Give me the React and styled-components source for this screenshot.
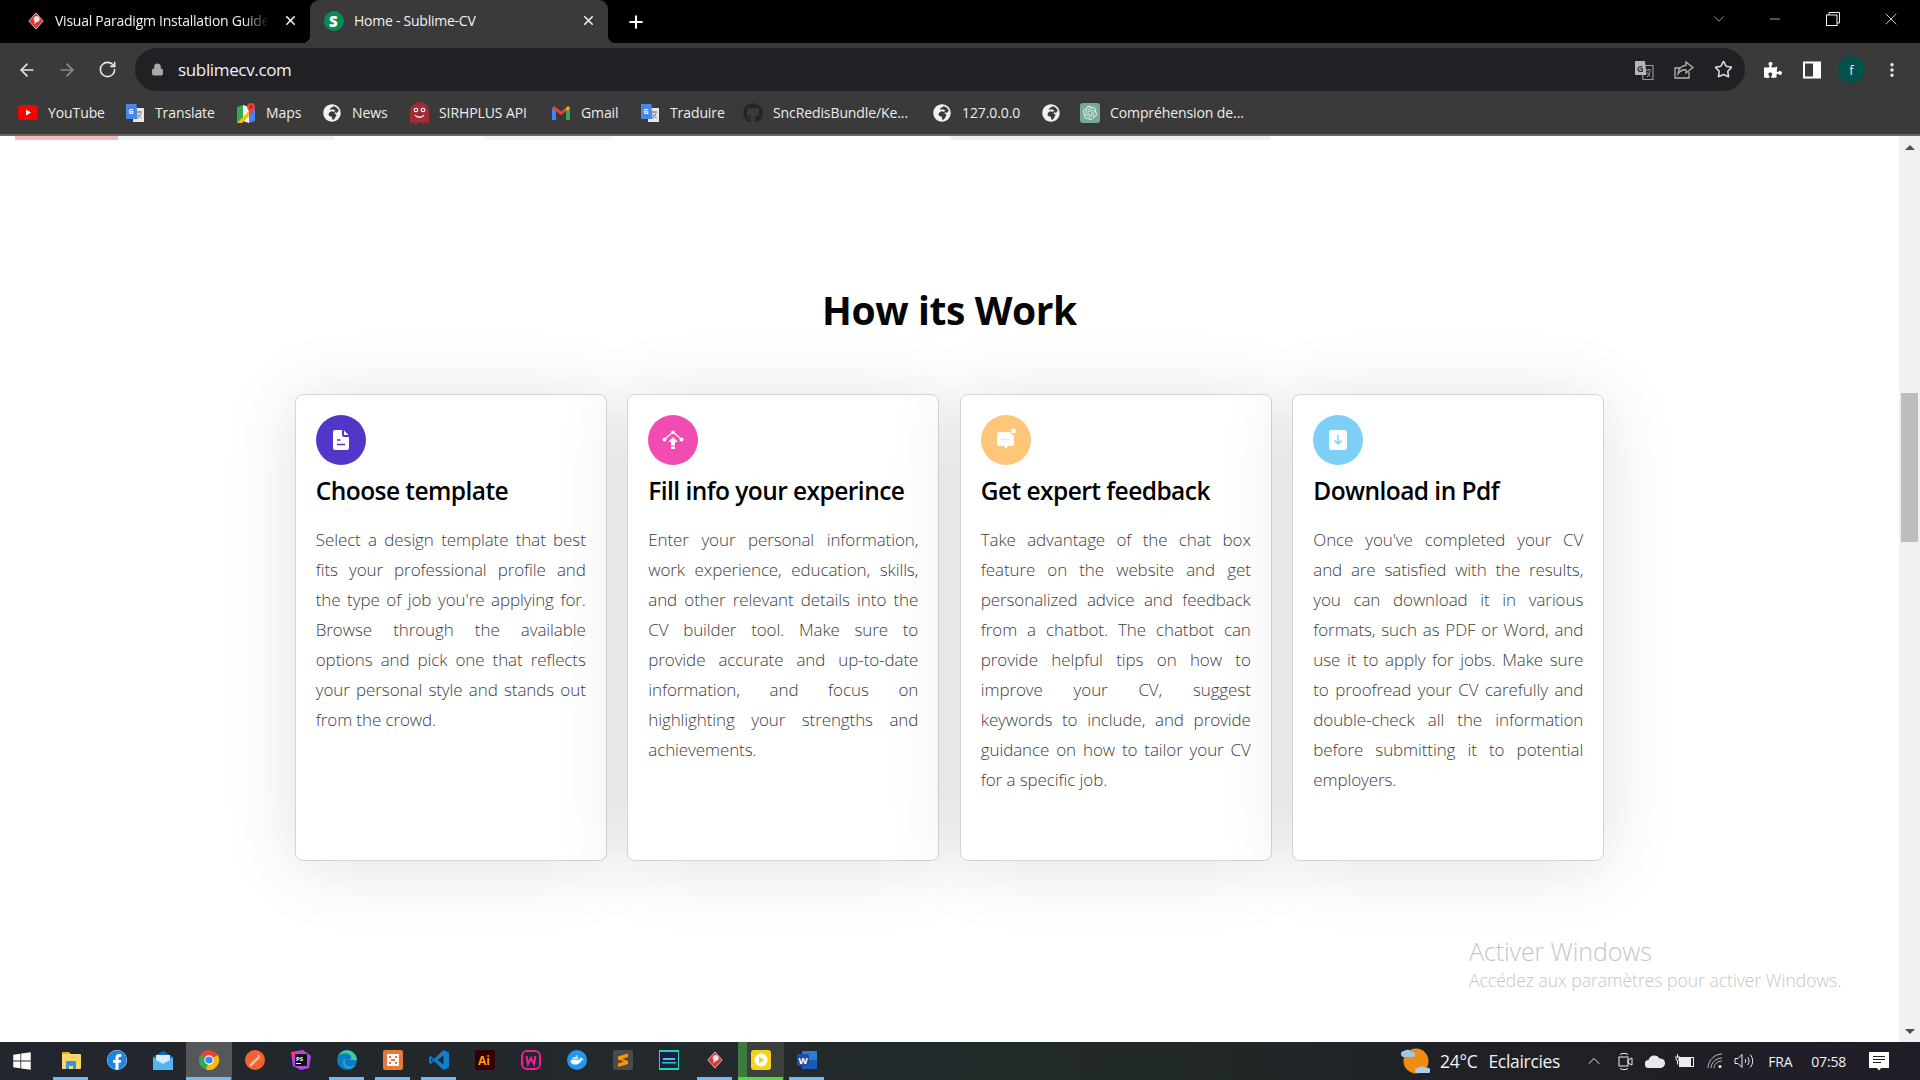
import React from 'react';
import styled, { createGlobalStyle } from 'styled-components';
import { ArrowLeft, ArrowRight, RotateCw, Star, X, Plus, ChevronDown, ChevronUp, Minus, Lock, MoreVertical } from 'lucide-react';
import { FaGithub, FaDocker, FaFacebook, FaPuzzlePiece, FaGlobeAfrica, FaWindows } from 'react-icons/fa';
import { SiOpenai } from 'react-icons/si';

const Global = createGlobalStyle`
	html, body { margin: 0; padding: 0; height: 100%; overflow: hidden; background: #fff; }
	#root { height: 100%; }
	* { box-sizing: border-box; }
`;

const Page = styled.div`
	display: flex;
	flex-direction: column;
	width: 1920px;
	height: 1080px;
	font-family: 'Open Sans', 'Noto Sans', sans-serif;
	position: relative;
	overflow: hidden;
`;

const TabStrip = styled.div`
	display: flex;
	align-items: stretch;
	height: 43px;
	background: #000;
	color: #fff;
	padding-left: 12px;
	flex-shrink: 0;
`;

const Tab = styled.div`
	position: relative;
	display: flex;
	align-items: center;
	width: ${(p) => p.$w}px;
	padding-left: ${(p) => p.$pad}px;
	padding-right: 12px;
	padding-bottom: 2px;
	background: ${(p) => (p.$active ? '#3a3a3a' : 'transparent')};
	border-radius: 9px 9px 0 0;
	${(p) =>
		p.$active &&
		`
		&::before, &::after {
			content: '';
			position: absolute;
			bottom: 0;
			width: 8px;
			height: 8px;
			background: radial-gradient(circle at ${'var(--c)'}, transparent 8px, #3a3a3a 8.5px);
		}
		&::before { left: -8px; --c: 0 0; }
		&::after { right: -8px; --c: 100% 0; }
	`}
`;

const TabIcon = styled.span`
	display: flex;
	width: ${(p) => p.$size}px;
	justify-content: center;
	margin-right: ${(p) => p.$gap}px;
	flex-shrink: 0;
`;

const TabTitle = styled.span`
	flex: 1;
	font-size: 14px;
	letter-spacing: -0.25px;
	white-space: nowrap;
	overflow: hidden;
	color: #f1f1f1;
	${(p) =>
		p.$fade &&
		`mask-image: linear-gradient(to right, #000 88%, transparent 100%);`}
`;

const NewTab = styled.div`
	display: flex;
	align-items: center;
	margin-left: 18px;
`;

const WindowControls = styled.div`
	margin-left: auto;
	display: flex;
	align-items: center;
	height: 100%;
	padding-bottom: 5px;
`;

const WinBtn = styled.div`
	display: flex;
	justify-content: center;
	align-items: center;
	width: ${(p) => p.$w}px;
`;

const Toolbar = styled.div`
	display: flex;
	align-items: flex-end;
	height: 48px;
	background: #3a3a3a;
	flex-shrink: 0;
	padding-left: 17px;
`;

const NavGroup = styled.div`
	display: flex;
	align-items: center;
	height: 43px;
`;

const NavBtn = styled.div`
	display: flex;
	justify-content: center;
	width: 20px;
	margin-right: ${(p) => p.$mr ?? 20}px;
`;

const Omnibox = styled.div`
	display: flex;
	align-items: center;
	width: 1610px;
	height: 43px;
	margin-left: 18px;
	background: #202124;
	border-radius: 22px;
	padding-left: 16px;
	padding-right: 12px;
`;

const Url = styled.span`
	color: #f1f1f1;
	font-size: 17px;
	letter-spacing: -0.35px;
	margin-left: 14px;
`;

const OmniRight = styled.div`
	margin-left: auto;
	display: flex;
	align-items: center;
	gap: 20px;
`;

const ToolRight = styled.div`
	display: flex;
	align-items: center;
	height: 43px;
	margin-left: 19px;
`;

const Avatar = styled.div`
	width: 27px;
	height: 27px;
	border-radius: 50%;
	background: #00524a;
	color: #e8f0ee;
	font-size: 13px;
	display: flex;
	align-items: center;
	justify-content: center;
	margin: 0 18px 0 17px;
`;

const Bookmarks = styled.div`
	display: flex;
	align-items: center;
	height: 45px;
	background: #3a3a3a;
	border-bottom: 2px solid #666;
	padding-left: 18px;
	flex-shrink: 0;
`;

const Bookmark = styled.div`
	display: flex;
	align-items: center;
	width: ${(p) => p.$w}px;
	flex-shrink: 0;
`;

const BmIcon = styled.span`
	display: flex;
	justify-content: center;
	width: 20px;
	margin-right: ${(p) => (p.$label ? 10 : 0)}px;
`;

const BmLabel = styled.span`
	color: #ededed;
	font-size: 14px;
	letter-spacing: -0.1px;
	white-space: nowrap;
`;

const Viewport = styled.div`
	flex: 1;
	display: flex;
	min-height: 0;
	background: #fff;
`;

const Content = styled.main`
	flex: 1;
	min-width: 0;
	display: flex;
	flex-direction: column;
	align-items: center;
	position: relative;
`;

const CutOffRow = styled.div`
	align-self: stretch;
	display: flex;
	height: 4px;
	padding-left: 15px;
`;

const CutOff = styled.div`
	width: ${(p) => p.$w}px;
	margin-right: ${(p) => p.$mr || 0}px;
	background: ${(p) => p.$c};
`;

const Heading = styled.h2`
	margin: 145px 0 0;
	height: 50px;
	line-height: 50px;
	font-size: 39px;
	font-weight: 700;
	letter-spacing: -0.4px;
	color: #050505;
`;

const Cards = styled.div`
	display: grid;
	grid-template-columns: repeat(4, 312px);
	gap: 20.5px;
	margin-top: 59px;
`;

const Card = styled.article`
	height: 467px;
	background: #fff;
	border: 1px solid #d4d4d4;
	border-radius: 8px;
	padding: 20px 20px 0;
	box-shadow: 0 5px 75px rgba(0, 0, 0, 0.12);
`;

const Badge = styled.div`
	width: 50px;
	height: 50px;
	border-radius: 50%;
	background: ${(p) => p.$bg};
	display: flex;
	align-items: center;
	justify-content: center;
`;

const CardTitle = styled.h3`
	margin: 9px 0 0;
	height: 34px;
	line-height: 34px;
	font-size: 24.5px;
	font-weight: 600;
	letter-spacing: -0.55px;
	color: #000;
	white-space: nowrap;
`;

const Body = styled.p`
	margin: 17px 0 0;
	font-size: 17px;
	font-weight: 300;
	line-height: 30px;
	letter-spacing: -0.1px;
	color: #404040;
`;

const Line = styled.span`
	display: block;
	text-align: justify;
	text-align-last: ${(p) => (p.$last ? 'left' : 'justify')};
`;

const Watermark = styled.div`
	position: absolute;
	left: 1469px;
	top: 799px;
	color: #c6c6c6;
	font-weight: 300;
	white-space: nowrap;
`;

const WmTitle = styled.div`
	font-size: 25px;
	line-height: 32px;
	letter-spacing: -0.1px;
`;

const WmSub = styled.div`
	font-size: 17.5px;
	line-height: 26px;
	letter-spacing: 0;
`;

const Scrollbar = styled.div`
	width: 21px;
	background: #f1f1f1;
	display: flex;
	flex-direction: column;
	align-items: center;
	padding-top: 9px;
	padding-bottom: 8px;
`;

const Thumb = styled.div`
	width: 17px;
	height: 149px;
	background: #bdbdbd;
	margin-top: 243px;
	margin-bottom: auto;
`;

const Arrow = styled.div`
	width: 0;
	height: 0;
	border-left: 5px solid transparent;
	border-right: 5px solid transparent;
	${(p) => (p.$down ? 'border-top: 5px solid #505050;' : 'border-bottom: 5px solid #505050;')}
`;

const Taskbar = styled.div`
	display: flex;
	align-items: stretch;
	height: 38px;
	background: linear-gradient(to right, #22262d 0%, #23292c 40%, #222a28 60%, #1f2126 75%, #211d26 100%);
	flex-shrink: 0;
`;

const StartBtn = styled.div`
	width: 48px;
	display: flex;
	align-items: center;
	justify-content: center;
	padding-right: 4px;
`;

const Cell = styled.div`
	position: relative;
	width: 46px;
	display: flex;
	align-items: center;
	justify-content: center;
	padding-bottom: 2px;
	background: ${(p) =>
		p.$state === 'focus'
			? '#55575b'
			: p.$state === 'flash'
			? 'linear-gradient(to right, #3d7a3d 0 9px, #3b403c 9px)'
			: 'transparent'};
	${(p) =>
		p.$state &&
		`&::after {
			content: '';
			position: absolute;
			bottom: 0;
			left: ${p.$state === 'open' ? 5 : 0}px;
			right: ${p.$state === 'open' ? 6 : 1}px;
			height: 3px;
			background: ${p.$state === 'flash' ? '#4fdd3c' : '#76b9ed'};
		}`}
`;

const Tray = styled.div`
	margin-left: auto;
	display: flex;
	align-items: center;
	color: #f2f2f2;
	padding-right: 31px;
`;

const WeatherText = styled.span`
	font-size: 17.5px;
	letter-spacing: -0.3px;
	margin-left: ${(p) => p.$ml}px;
	white-space: nowrap;
`;

const TrayItem = styled.span`
	display: flex;
	align-items: center;
	justify-content: center;
	margin-left: ${(p) => p.$ml}px;
`;

const TrayText = styled.span`
	font-size: 14px;
	letter-spacing: -0.2px;
	margin-left: ${(p) => p.$ml}px;
`;

const VpLogo = ({ size = 18 }) => (
	<svg width={size} height={size} viewBox="0 0 20 20">
		<path d="M10 1l8 9-8 9-8-9z" fill="#d43b3b" stroke="#e9b9b9" strokeWidth="1" />
		<path d="M9 5a3.4 3.4 0 1 1 1.5 6.3L8 14l.6-3.6A3.4 3.4 0 0 1 9 5z" fill="#fff" opacity=".85" />
	</svg>
);

const GTranslate = () => (
	<svg width="20" height="20" viewBox="0 0 20 20">
		<path d="M8 5h11v14H8z" fill="#e5e7ea" />
		<path d="M1 1h10.5l1 15H1z" fill="#4a86e8" />
		<text x="3.5" y="11" fontSize="7" fontWeight="700" fill="#fff" fontFamily="Open Sans">G</text>
		<path d="M11 9h6M14 8v2M12.5 15c2-1 3-3 3.5-5M13 11c.5 2 2 3.5 3.5 4" stroke="#777" strokeWidth="1" fill="none" />
	</svg>
);

const MapsIcon = () => (
	<svg width="18" height="20" viewBox="0 0 18 20">
		<path d="M0 4l6-2v16l-6 2z" fill="#34a853" />
		<path d="M6 2l6 2v16l-6-2z" fill="#f4f4f4" />
		<path d="M12 8l6-2v12l-6 2z" fill="#4285f4" />
		<path d="M0 20l12-12v5l-7 7z" fill="#fbbc04" />
		<path d="M14 0a4 4 0 0 1 4 4c0 2.500-3 5-4 8-1-3-4-5.500-4-8a4 4 0 0 1 4-4z" fill="#ea4335" />
		<circle cx="14" cy="4" r="1.500" fill="#8e2a1f" />
	</svg>
);

const GhostIcon = () => (
	<svg width="19" height="22" viewBox="0 0 19 22">
		<path d="M0 9a9.500 9 0 0 1 19 0v13l-3-2-3 2-3.500-2-3.500 2-3-2-3 2z" fill="#a42a38" />
		<circle cx="6" cy="8" r="2.300" fill="#f4f4f4" />
		<circle cx="13" cy="8" r="2.300" fill="#f4f4f4" />
		<circle cx="6" cy="8" r="1" fill="#222" />
		<circle cx="13" cy="8" r="1" fill="#222" />
		<path d="M5 13c2 3 7 3 9 0" stroke="#f4f4f4" strokeWidth="1.300" fill="none" />
	</svg>
);

const GmailIcon = () => (
	<svg width="18" height="14" viewBox="0 0 18 14">
		<path d="M0 2v12h4V5z" fill="#4285f4" />
		<path d="M14 5v9h4V2z" fill="#34a853" />
		<path d="M0 2l9 7 9-7-2-2-7 5.500L2 0z" fill="#ea4335" />
		<path d="M14 3l2-3 2 2-4 3z" fill="#fbbc04" />
	</svg>
);

const YtIcon = () => (
	<svg width="20" height="15" viewBox="0 0 20 15">
		<rect width="20" height="15" rx="4" fill="#f00" />
		<path d="M8 4.500l5 3-5 3z" fill="#fff" />
	</svg>
);

const ChatGptIcon = () => (
	<svg width="20" height="20" viewBox="0 0 20 20" style={{ borderRadius: 3, background: '#74aa9c' }}>
		<g transform="translate(3 3) scale(0.583)">
			<SiOpenai size={24} color="#dff0ea" />
		</g>
	</svg>
);

const TranslateOmni = () => (
	<svg width="20" height="20" viewBox="0 0 20 20">
		<path d="M8 5.500h11v14H9z" fill="none" stroke="#9a9a9a" strokeWidth="1.100" />
		<path d="M1 1h10l1.500 14H1z" fill="#b5b5b5" />
		<text x="3" y="11.500" fontSize="9" fontWeight="700" fill="#333" fontFamily="Open Sans">G</text>
		<path d="M12 10h5M14.500 9v1M13 17c2-1.500 2.500-3.500 3-6M13.500 12.500c.5 1.500 2 3 3 4" stroke="#9a9a9a" strokeWidth="1" fill="none" />
	</svg>
);

const ShareArrow = () => (
	<svg width="20" height="20" viewBox="0 0 20 20" fill="none" stroke="#b5b5b5" strokeWidth="1.300">
		<path d="M15 12v6H1V8h5" />
		<path d="M12 2l7 5.500-7 5.500v-3.200c-3.500-.3-6 1-8 4 .3-4.500 3-8 8-8.500z" />
	</svg>
);

const SidePanel = () => (
	<svg width="18" height="18" viewBox="0 0 18 18">
		<rect x="1" y="1.500" width="16" height="15" fill="none" stroke="#fff" strokeWidth="2" />
		<rect x="10" y="1.500" width="7" height="15" fill="#fff" />
	</svg>
);

const Restore = () => (
	<svg width="14" height="14" viewBox="0 0 14 14" fill="none" stroke="#f0f0f0" strokeWidth="1">
		<rect x=".5" y="3" width="10.500" height="10.500" />
		<path d="M3 3V.5h10.500V11H11" />
	</svg>
);

const DocIcon = () => (
	<svg width="18" height="22" viewBox="0 0 18 22">
		<path d="M3 1h7v5a2 2 0 0 0 2 2h5v11a2 2 0 0 1-2 2H3a2 2 0 0 1-2-2V3a2 2 0 0 1 2-2z" fill="#fff" />
		<path d="M12 1.500l4.500 4.500h-4.500z" fill="#fff" />
		<path d="M5 11h3.500M5 15.500h8" stroke="#5136c9" strokeWidth="1.400" />
	</svg>
);

const UploadNodes = () => (
	<svg width="22" height="20" viewBox="0 0 22 20">
		<path d="M11 7l5 5h-3v3.500H9V12H6z" fill="#fff" />
		<rect x="9" y="16.500" width="4" height="2.500" fill="#fff" />
		<path d="M3 9l8-7 8 7" stroke="#fff" strokeWidth="1.300" fill="none" />
		<circle cx="11" cy="2.200" r="1.800" fill="#fff" />
		<circle cx="2.500" cy="9.500" r="2" fill="#fff" />
		<circle cx="19.500" cy="9.500" r="2" fill="#fff" />
	</svg>
);

const ChatBubble = () => (
	<svg width="20" height="24" viewBox="0 0 20 24">
		<path d="M3 4h11.500a4 4 0 0 0 3.500 3.500V16a2 2 0 0 1-2 2h-4l-2 3-2-3H3a2 2 0 0 1-2-2V6a2 2 0 0 1 2-2z" fill="#fff" />
		<circle cx="17.500" cy="3" r="2.500" fill="#fff" />
		<circle cx="6" cy="11.500" r=".8" fill="#fdc678" />
		<circle cx="9" cy="11.500" r=".8" fill="#fdc678" />
		<circle cx="12" cy="11.500" r=".8" fill="#fdc678" />
	</svg>
);

const DownloadBox = () => (
	<svg width="18" height="20" viewBox="0 0 18 20">
		<rect width="18" height="20" rx="3" fill="#fff" />
		<path d="M9 5v9M5.500 10.500L9 14l3.500-3.500" stroke="#7dcff5" strokeWidth="1.400" fill="none" />
	</svg>
);

const Explorer = () => (
	<svg width="20" height="18" viewBox="0 0 20 18">
		<path d="M1 1h7l2 2H1z" fill="#e0a92e" />
		<path d="M1 3h18a1 1 0 0 1 1 1v13a1 1 0 0 1-1 1H1z" fill="#fbd669" />
		<path d="M5 10h10v8h-3v-3H8v3H5z" fill="#3f93d8" />
	</svg>
);

const Mail = () => (
	<svg width="20" height="19" viewBox="0 0 20 19">
		<path d="M0 6L10 0l10 6v13H0z" fill="#0f6cbd" />
		<path d="M0 6l10 7 10-7v13H0z" fill="#50b7f0" />
		<path d="M3 4h14v5l-7 4-7-4z" fill="#d8ecfa" />
	</svg>
);

const Chrome = () => (
	<svg width="20" height="20" viewBox="0 0 20 20">
		<circle cx="10" cy="10" r="10" fill="#ea4335" />
		<path d="M10 10L1.340 5A10 10 0 0 0 7 19.540z" fill="#34a853" />
		<path d="M10 10l8.660-5A10 10 0 0 1 7 19.540z" fill="#fbbc04" />
		<circle cx="10" cy="10" r="4.700" fill="#fff" />
		<circle cx="10" cy="10" r="3.600" fill="#4285f4" />
	</svg>
);

const Postman = () => (
	<svg width="20" height="20" viewBox="0 0 20 20">
		<circle cx="10" cy="10" r="10" fill="#f6622f" />
		<path d="M5 15l8-8 1 1-8 8zM13 5l2 2" stroke="#ffc7a8" strokeWidth="1.200" fill="none" />
	</svg>
);

const PhpStorm = () => (
	<svg width="20" height="20" viewBox="0 0 20 20">
		<path d="M0 2l12-2 8 6-2 12-8 2-8-4z" fill="#b345f1" />
		<path d="M0 2l6 0 0 14z" fill="#ff318c" />
		<rect x="4" y="4" width="12" height="12" fill="#111" />
		<text x="5" y="10.500" fontSize="6" fontWeight="700" fill="#fff" fontFamily="Open Sans">PS</text>
		<rect x="5" y="13" width="5" height="1" fill="#fff" />
	</svg>
);

const Edge = () => (
	<svg width="20" height="20" viewBox="0 0 20 20">
		<circle cx="10" cy="10" r="10" fill="#0c7cc4" />
		<path d="M20 10a10 10 0 0 0-19-4c3-3 9-4 12-1 2 2 2 5-2 5z" fill="#3fd08f" />
		<path d="M8 12c0 4 5 6 11 3-3 5-11 5-13 0-1-3 0-6 2-7z" fill="#16a7d8" />
	</svg>
);

const Xampp = () => (
	<svg width="20" height="20" viewBox="0 0 20 20">
		<rect width="20" height="20" rx="2" fill="#e8773d" />
		<path d="M5 5h4v3h2V5h4v4h-2v2h2v4h-4v-3H9v3H5v-4h2V9H5z" fill="none" stroke="#fff" strokeWidth="1.800" />
	</svg>
);

const VsCode = () => (
	<svg width="20" height="20" viewBox="0 0 20 20">
		<path d="M14.500 0L20 2.500v15L14.500 20 5 11l-3 3-2-1V7l2-1 3 3z" fill="#0d7fd0" />
		<path d="M14.500 5.500L8.500 10l6 4.500z" fill="#22262d" />
		<path d="M2 8l2 2-2 2z" fill="#22262d" />
	</svg>
);

const Illustrator = () => (
	<svg width="20" height="20" viewBox="0 0 20 20">
		<rect width="20" height="20" rx="2" fill="#330000" />
		<text x="3" y="14.500" fontSize="12" fontWeight="700" fill="#ff9a00" fontFamily="Open Sans">Ai</text>
	</svg>
);

const Wamp = () => (
	<svg width="20" height="20" viewBox="0 0 20 20" fill="none" stroke="#f01e9a" strokeWidth="2">
		<rect x="1" y="1" width="18" height="18" rx="5" />
		<path d="M5.500 6l1.500 8 3-6 3 6 1.500-8" />
	</svg>
);

const DockerBadge = () => (
	<svg width="20" height="20" viewBox="0 0 20 20">
		<circle cx="10" cy="10" r="10" fill="#2396ed" />
		<g transform="translate(3.500 3.500)">
			<FaDocker size={13} color="#fff" />
		</g>
	</svg>
);

const Sublime = () => (
	<svg width="20" height="20" viewBox="0 0 20 20">
		<rect width="20" height="20" rx="2" fill="#4a4a4a" />
		<path d="M5 6.500L15 3.500v3.500L9 9l6 2v3L5 17v-3.500l6-2-6-2z" fill="#ff9800" />
	</svg>
);

const Screencast = () => (
	<svg width="20" height="20" viewBox="0 0 20 20">
		<rect width="20" height="20" fill="#1fd8a4" />
		<rect x="1" y="2" width="18" height="16" fill="#1b1b55" />
		<rect x="4" y="8" width="12" height="2" fill="#8fd" opacity=".7" />
		<rect x="3" y="12" width="14" height="1.500" fill="#1fd8a4" />
	</svg>
);

const Player = () => (
	<svg width="20" height="20" viewBox="0 0 20 20">
		<rect width="20" height="20" rx="3" fill="#f7d21a" />
		<circle cx="10" cy="10" r="6.500" fill="#fff" />
		<path d="M8 6.500l5.500 3.500L8 13.500z" fill="#f7d21a" />
	</svg>
);

const Word = () => (
	<svg width="20" height="18" viewBox="0 0 20 18">
		<rect x="5" width="15" height="18" rx="1" fill="#2b7cd3" />
		<rect x="5" y="9" width="15" height="9" fill="#185abd" />
		<rect y="3" width="12" height="12" rx="1" fill="#1e4ea8" />
		<text x="1.500" y="12.500" fontSize="9.500" fontWeight="700" fill="#fff" fontFamily="Open Sans">W</text>
	</svg>
);

const Weather = () => (
	<svg width="30" height="30" viewBox="0 0 30 30">
		<circle cx="16" cy="15" r="12.500" fill="#f08c14" />
		<path d="M1 8a3 3 0 0 1 3-3 5 4 0 0 1 8 1 2.500 2.500 0 0 1 1 5H3a3 3 0 0 1-2-3z" fill="#9cc7ea" />
		<path d="M15 25a3 3 0 0 1 3-3 5 4 0 0 1 8 0 2.500 2.500 0 0 1 3 5H17a3 3 0 0 1-2-2z" fill="#a8cfee" />
	</svg>
);

const MeetNow = () => (
	<svg width="15" height="19" viewBox="0 0 15 19" fill="none" stroke="#eee" strokeWidth="1">
		<rect x="1" y="5" width="9" height="9" />
		<path d="M10 8l4-2v7l-4-2z" />
		<path d="M2 2.500c2-1.500 6-1.500 8 0M2 16.500c2 1.500 6 1.500 8 0" />
	</svg>
);

const Cloud = () => (
	<svg width="20" height="13" viewBox="0 0 20 13">
		<path d="M4 13a4 4 0 0 1-.5-8 6 6 0 0 1 11-1.500A4.800 4.800 0 0 1 16 13z" fill="#e8e8e8" />
	</svg>
);

const Battery = () => (
	<svg width="20" height="14" viewBox="0 0 20 14" fill="none" stroke="#eee">
		<rect x="4.500" y="3.500" width="14" height="9" />
		<rect x="5.500" y="4.500" width="10" height="7" fill="#eee" />
		<path d="M2.500 0v4M1 2v3a1.500 1.500 0 0 0 3 0V2M2.500 6.500v4" />
	</svg>
);

const Wifi = () => (
	<svg width="16" height="16" viewBox="0 0 16 16" fill="none" stroke="#bbb">
		<path d="M1 15C1 8 7 1 15 1M4 15c0-5 5-10 11-10M7 15c0-3 3-7 8-7" />
		<circle cx="13" cy="13.500" r="1.500" fill="#eee" stroke="none" />
	</svg>
);

const Speaker = () => (
	<svg width="20" height="16" viewBox="0 0 20 16" fill="none" stroke="#eee">
		<path d="M1 5.500h3l4-4v13l-4-4H1zM11 6c1 1 1 3 0 4M13.500 4c2 2 2 6 0 8M16 1.500c3.500 3 3.500 10 0 13" />
	</svg>
);

const Notify = () => (
	<svg width="20" height="20" viewBox="0 0 20 20">
		<path d="M0 1h20v16h-8l-2 2.500L8 17H0z" fill="#fff" />
		<path d="M4 5.500h12M4 8.500h12M4 11.500h8" stroke="#222" strokeWidth="1" />
	</svg>
);

const bookmarks = [
	{ w: 107, icon: <YtIcon />, label: 'YouTube' },
	{ w: 111, icon: <GTranslate />, label: 'Translate' },
	{ w: 86, icon: <MapsIcon />, label: 'Maps' },
	{ w: 87, icon: <FaGlobeAfrica size={18} color="#f1f1f1" />, label: 'News' },
	{ w: 142, icon: <GhostIcon />, label: 'SIRHPLUS API' },
	{ w: 89, icon: <GmailIcon />, label: 'Gmail' },
	{ w: 103, icon: <GTranslate />, label: 'Traduire' },
	{ w: 189, icon: <FaGithub size={20} color="#20252b" />, label: 'SncRedisBundle/Ke...' },
	{ w: 109, icon: <FaGlobeAfrica size={18} color="#f1f1f1" />, label: '127.0.0.0' },
	{ w: 39, icon: <FaGlobeAfrica size={18} color="#f1f1f1" /> },
	{ w: 180, icon: <ChatGptIcon />, label: 'Compréhension de...' },
];

const steps = [
	{
		color: '#5136c9',
		icon: <DocIcon />,
		title: 'Choose template',
		lines: [
			'Select a design template that best',
			'fits your professional profile and',
			"the type of job you're applying for.",
			'Browse through the available',
			'options and pick one that reflects',
			'your personal style and stands out',
			'from the crowd.',
		],
	},
	{
		color: '#f04cb2',
		icon: <UploadNodes />,
		title: 'Fill info your experince',
		lines: [
			'Enter your personal information,',
			'work experience, education, skills,',
			'and other relevant details into the',
			'CV builder tool. Make sure to',
			'provide accurate and up-to-date',
			'information, and focus on',
			'highlighting your strengths and',
			'achievements.',
		],
	},
	{
		color: '#fdc678',
		icon: <ChatBubble />,
		title: 'Get expert feedback',
		lines: [
			'Take advantage of the chat box',
			'feature on the website and get',
			'personalized advice and feedback',
			'from a chatbot. The chatbot can',
			'provide helpful tips on how to',
			'improve your CV, suggest',
			'keywords to include, and provide',
			'guidance on how to tailor your CV',
			'for a specific job.',
		],
	},
	{
		color: '#7dcff5',
		icon: <DownloadBox />,
		title: 'Download in Pdf',
		lines: [
			"Once you've completed your CV",
			'and are satisfied with the results,',
			'you can download it in various',
			'formats, such as PDF or Word, and',
			'use it to apply for jobs. Make sure',
			'to proofread your CV carefully and',
			'double-check all the information',
			'before submitting it to potential',
			'employers.',
		],
	},
];

const taskIcons = [
	{ icon: <Explorer />, state: 'open' },
	{ icon: <FaFacebook size={20} color="#1a86e8" style={{ background: '#fff', borderRadius: '50%' }} /> },
	{ icon: <Mail /> },
	{ icon: <Chrome />, state: 'focus' },
	{ icon: <Postman /> },
	{ icon: <PhpStorm /> },
	{ icon: <Edge />, state: 'open' },
	{ icon: <Xampp />, state: 'open' },
	{ icon: <VsCode />, state: 'open' },
	{ icon: <Illustrator /> },
	{ icon: <Wamp /> },
	{ icon: <DockerBadge /> },
	{ icon: <Sublime /> },
	{ icon: <Screencast /> },
	{ icon: <VpLogo />, state: 'open' },
	{ icon: <Player />, state: 'flash' },
	{ icon: <Word />, state: 'open' },
];

export default function App() {
	return (
		<Page>
			<Global />
			<TabStrip>
				<Tab $w={298} $pad={15}>
					<TabIcon $size={18} $gap={10}>
						<VpLogo />
					</TabIcon>
					<TabTitle $fade>Visual Paradigm Installation Guide</TabTitle>
					<X size={15} color="#f1f1f1" strokeWidth={2.5} style={{ marginLeft: 14 }} />
				</Tab>
				<Tab $w={298} $pad={14} $active>
					<TabIcon $size={20} $gap={10}>
						<svg width="20" height="20" viewBox="0 0 20 20">
							<circle cx="10" cy="10" r="10" fill="#0a8a55" />
							<text x="5" y="15.500" fontSize="15" fontWeight="800" fill="#fff" fontFamily="Open Sans">S</text>
						</svg>
					</TabIcon>
					<TabTitle>Home - Sublime-CV</TabTitle>
					<X size={15} color="#f1f1f1" strokeWidth={2.5} />
				</Tab>
				<NewTab>
					<Plus size={20} color="#fff" strokeWidth={2.5} />
				</NewTab>
				<WindowControls>
					<WinBtn $w={54}>
						<ChevronDown size={18} color="#cfcfcf" strokeWidth={1} />
					</WinBtn>
					<WinBtn $w={58}>
						<Minus size={16} color="#f0f0f0" strokeWidth={1} />
					</WinBtn>
					<WinBtn $w={58}>
						<Restore />
					</WinBtn>
					<WinBtn $w={58}>
						<X size={20} color="#f0f0f0" strokeWidth={1} />
					</WinBtn>
				</WindowControls>
			</TabStrip>
			<Toolbar>
				<NavGroup>
					<NavBtn>
						<ArrowLeft size={20} color="#e8e8e8" strokeWidth={2} />
					</NavBtn>
					<NavBtn>
						<ArrowRight size={20} color="#8a8a8a" strokeWidth={2} />
					</NavBtn>
					<NavBtn $mr={0}>
						<RotateCw size={19} color="#e8e8e8" strokeWidth={2} />
					</NavBtn>
				</NavGroup>
				<Omnibox>
					<Lock size={13} color="#a8a8a8" fill="#a8a8a8" />
					<Url>sublimecv.com</Url>
					<OmniRight>
						<TranslateOmni />
						<ShareArrow />
						<Star size={19} color="#dcdcdc" strokeWidth={2} />
					</OmniRight>
				</Omnibox>
				<ToolRight>
					<FaPuzzlePiece size={18} color="#fff" style={{ marginRight: 21 }} />
					<SidePanel />
					<Avatar>f</Avatar>
					<MoreVertical size={18} color="#ededed" strokeWidth={2.5} />
				</ToolRight>
			</Toolbar>
			<Bookmarks>
				{bookmarks.map((b, i) => (
					<Bookmark key={i} $w={b.w}>
						<BmIcon $label={!!b.label}>{b.icon}</BmIcon>
						{b.label && <BmLabel>{b.label}</BmLabel>}
					</Bookmark>
				))}
			</Bookmarks>
			<Viewport>
				<Content>
					<CutOffRow>
						<CutOff $w={103} $c="#f4baba" />
						<CutOff $w={216} $mr={149} $c="#f3f3f3" />
						<CutOff $w={130} $mr={338} $c="#f6f6f6" />
						<CutOff $w={319} $c="#f1f1f1" />
					</CutOffRow>
					<Heading>How its Work</Heading>
					<Cards>
						{steps.map((s) => (
							<Card key={s.title}>
								<Badge $bg={s.color}>{s.icon}</Badge>
								<CardTitle>{s.title}</CardTitle>
								<Body>
									{s.lines.map((l, i) => (
										<Line key={i} $last={i === s.lines.length - 1}>
											{l}
										</Line>
									))}
								</Body>
							</Card>
						))}
					</Cards>
					<Watermark>
						<WmTitle>Activer Windows</WmTitle>
						<WmSub>Accédez aux paramètres pour activer Windows.</WmSub>
					</Watermark>
				</Content>
				<Scrollbar>
					<Arrow />
					<Thumb />
					<Arrow $down />
				</Scrollbar>
			</Viewport>
			<Taskbar>
				<StartBtn>
					<FaWindows size={20} color="#fff" />
				</StartBtn>
				{taskIcons.map((t, i) => (
					<Cell key={i} $state={t.state}>
						{t.icon}
					</Cell>
				))}
				<Tray>
					<Weather />
					<WeatherText $ml={10}>24°C</WeatherText>
					<WeatherText $ml={11}>Eclaircies</WeatherText>
					<TrayItem $ml={24}>
						<ChevronUp size={20} color="#eee" strokeWidth={1.2} />
					</TrayItem>
					<TrayItem $ml={14}>
						<MeetNow />
					</TrayItem>
					<TrayItem $ml={12}>
						<Cloud />
					</TrayItem>
					<TrayItem $ml={10}>
						<Battery />
					</TrayItem>
					<TrayItem $ml={12}>
						<Wifi />
					</TrayItem>
					<TrayItem $ml={11}>
						<Speaker />
					</TrayItem>
					<TrayText $ml={14}>FRA</TrayText>
					<TrayText $ml={19}>07:58</TrayText>
					<TrayItem $ml={23}>
						<Notify />
					</TrayItem>
				</Tray>
			</Taskbar>
		</Page>
	);
}
